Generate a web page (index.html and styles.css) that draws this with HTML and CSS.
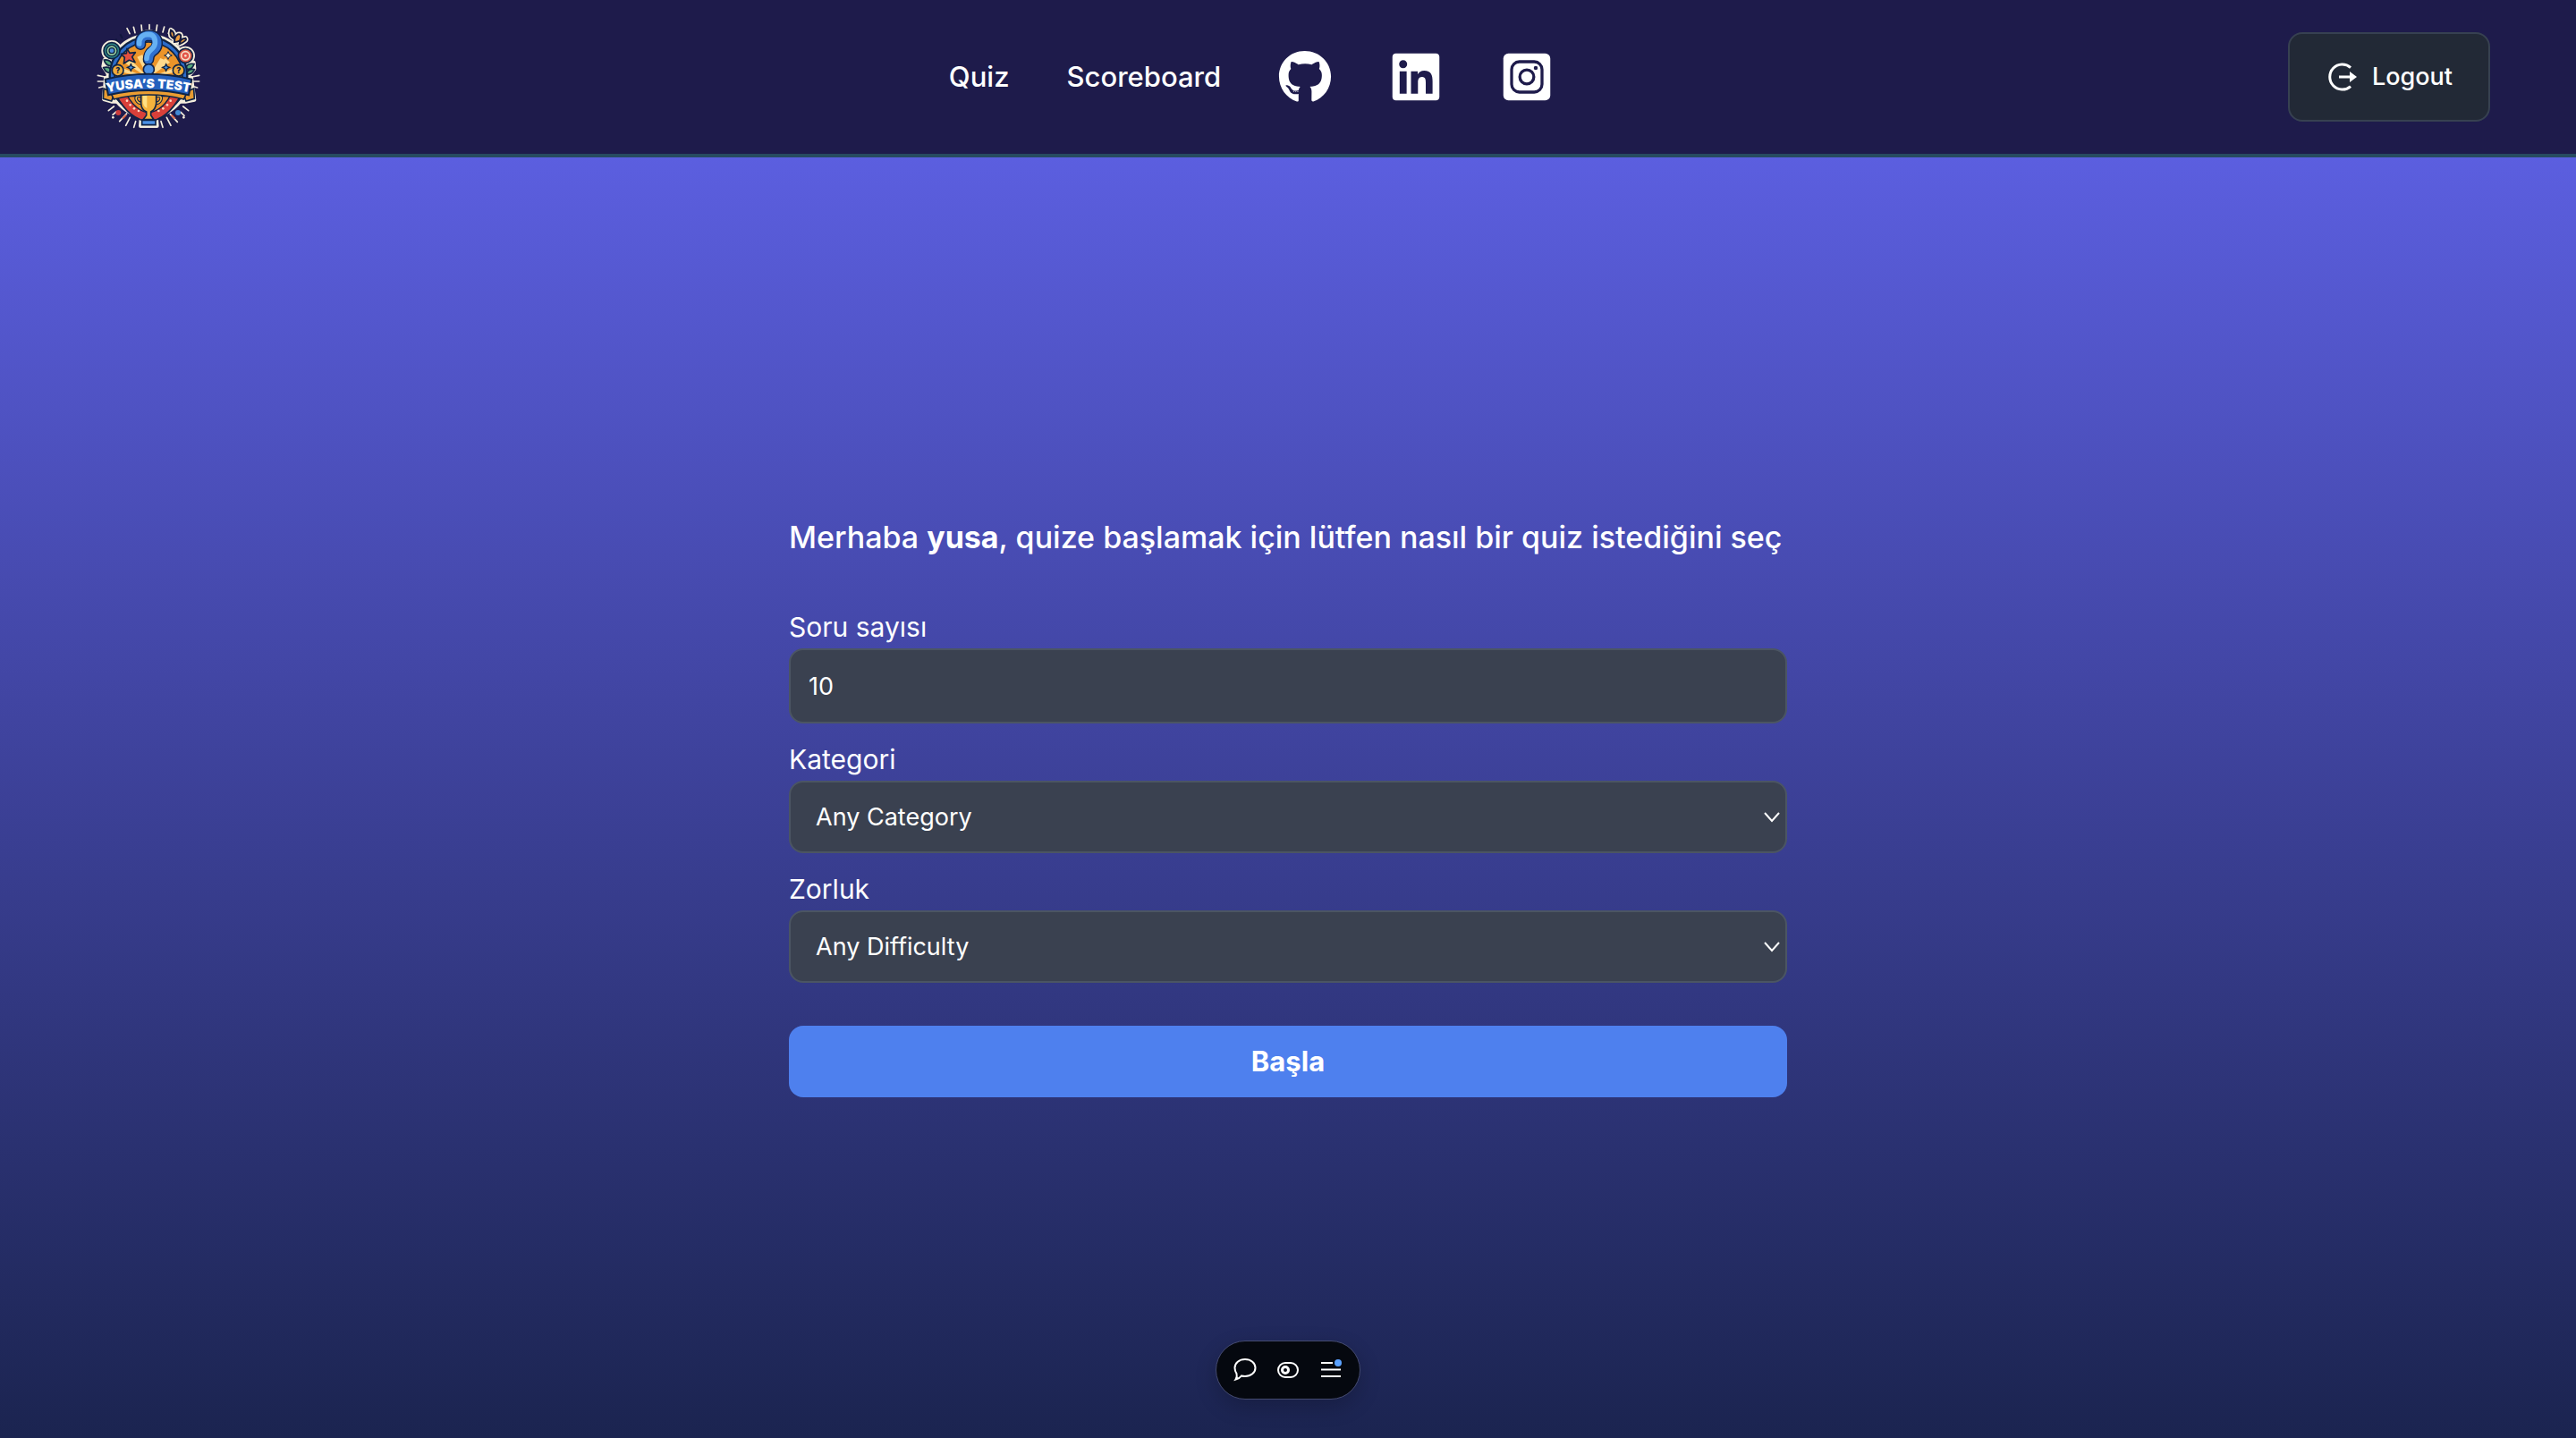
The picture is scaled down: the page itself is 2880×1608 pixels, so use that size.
FILE: index.html
```html
<!DOCTYPE html>
<html lang="tr">
<head>
<meta charset="utf-8">
<meta name="viewport" content="width=device-width, initial-scale=1">
<title>Yusa's Test</title>
<link rel="stylesheet" href="styles.css">
</head>
<body>
<header class="header">
  <a class="brand" href="#" aria-label="Yusa's Test">
    <svg class="logo" viewBox="0 0 450 450">
      <!-- rays -->
      <g stroke="#f4eedd" stroke-width="5" stroke-linecap="round">
        <path d="M156 62l9 18M178 58l5 19M204 51l2 19M231 50v17M257 51l-3 19M281 57l-5 18M303 62l-8 17M58 220l24 5M58 240h18M62 261l12-3M398 220l-24 5M398 240h-18M392 261l-10-3M94 338l18-14M108 352l12-10M131 374l24-26M152 388l14-27M179 394l6-20M362 338l-18-14M348 355l-12-12M325 376l-24-26M303 388l-14-27M276 394l-6-20"/>
      </g>
      <path d="M118 98l10 14M133 82l8 14" stroke="#10163c" stroke-width="6"/>
      <!-- cream outline around the whole badge -->
      <g fill="#f4eedd" stroke="#f4eedd" stroke-width="12" stroke-linejoin="round">
        <circle cx="228" cy="222" r="136"/>
        <circle cx="105" cy="137" r="29"/>
        <circle cx="352" cy="154" r="26"/>
        <circle cx="229" cy="113" r="40"/>
        <path d="M80 168l30 4v42H92L76 190zM380 176l-30 4v36h18l14-18zM84 228q144-32 288 0l10 74-30 6H104l-26-8zM205 340h48l4 50h-56z"/>
      </g>
      <!-- wreath leaves -->
      <g fill="#58a97c" stroke="#0f2344" stroke-width="5">
        <path d="M79 168q22-4 29 20-24 2-29-20zM77 194q22-6 32 14-22 10-32-14zM381 182q-22-6-30 16 22 6 30-16zM382 200q-18-4-28 14 20 6 28-14z"/>
      </g>
      <!-- disc -->
      <circle cx="228" cy="222" r="130" fill="#2c6cc9" stroke="#0f2344" stroke-width="7"/>
      <circle cx="228" cy="222" r="114" fill="#eb9429" stroke="#0f2344" stroke-width="5"/>
      <path d="M228 228L142 196l-9 12zM228 228l-62-64-14 16zM228 228l86-32 9 12zM228 228l56-66 16 14zM228 228l-38-70 18-8zM228 228l40-66 14 6z" fill="#ffd98c"/>
      <path d="M118 285q50 88 110 88t110-88z" fill="#d8403a" stroke="#0f2344" stroke-width="5"/>
      <path d="M158 290q30 50 70 55 44-5 72-55z" fill="#e98f2b" stroke="#0f2344" stroke-width="4"/>
      <g fill="#ffd8c4"><circle cx="156" cy="305" r="4"/><circle cx="167" cy="319" r="4"/><circle cx="180" cy="331" r="4"/><circle cx="195" cy="339" r="4"/><circle cx="302" cy="305" r="4"/><circle cx="291" cy="319" r="4"/><circle cx="277" cy="331" r="4"/><circle cx="262" cy="339" r="4"/></g>
      <!-- targets -->
      <circle cx="105" cy="137" r="27" fill="#2d8784" stroke="#0f2344" stroke-width="5"/>
      <circle cx="105" cy="137" r="18" fill="#9bd39f" stroke="#0f2344" stroke-width="4"/>
      <circle cx="105" cy="137" r="9" fill="#4d8ed9" stroke="#0f2344" stroke-width="4"/>
      <circle cx="352" cy="154" r="24" fill="#d95843" stroke="#0f2344" stroke-width="5"/>
      <circle cx="352" cy="154" r="14" fill="#e4574a" stroke="#f6dfc8" stroke-width="5"/>
      <circle cx="352" cy="154" r="4" fill="#f6dfc8"/>
      <!-- flourish -->
      <g fill="#ec9d3e" stroke="#f4eedd" stroke-width="16" stroke-linejoin="round">
        <path d="M303 68q14 6 10 28-16-8-10-28zM327 82q16-4 6 22-10 4-18 4 0-20 12-26zM352 95q8 8-20 20 0-18 20-20z"/>
      </g>
      <g fill="#ec9d3e" stroke="#131a3c" stroke-width="6">
        <path d="M303 68q14 6 10 28-16-8-10-28zM327 82q16-4 6 22-10 4-18 4 0-20 12-26zM352 95q8 8-20 20 0-18 20-20z"/>
      </g>
      <!-- star and sparkles -->
      <path d="M156 130l9 15 19-2-11 15 10 18-20-7-18 11 3-20-12-12 18-2z" fill="#e5503f" stroke="#0f2344" stroke-width="5" stroke-linejoin="round"/>
      <path d="M294 140l4 9 9 4-9 4-4 9-4-9-9-4 9-4z" fill="#fff4d6" stroke="#0f2344" stroke-width="3"/>
      <path d="M169 182l4 8 8 3-8 4-4 8-4-8-8-4 8-3zM287 182l4 8 8 3-8 4-4 8-4-8-8-4 8-3z" fill="#4c93dc" stroke="#0f2344" stroke-width="4"/>
      <!-- coins -->
      <circle cx="125" cy="203" r="19" fill="#efac3a" stroke="#0f2344" stroke-width="5"/>
      <circle cx="329" cy="203" r="19" fill="#efac3a" stroke="#0f2344" stroke-width="5"/>
      <text class="logo-coin" x="125" y="212" text-anchor="middle">?</text>
      <text class="logo-coin" x="329" y="212" text-anchor="middle">?</text>
      <!-- question mark -->
      <path d="M201 116Q198 87 230 86q29 1 27 29-1 15-17 25-11 8-12 27" fill="none" stroke="#10234a" stroke-width="38" stroke-linecap="round"/>
      <path d="M201 116Q198 87 230 86q29 1 27 29-1 15-17 25-11 8-12 27" fill="none" stroke="#2f70cf" stroke-width="29" stroke-linecap="round"/>
      <path d="M197 114Q196 83 228 82q24 1 22 31-2 13-16 23-11 8-12 27" fill="none" stroke="#66b1f3" stroke-width="17" stroke-linecap="round"/>
      <circle cx="229" cy="200" r="18" fill="#4b91e4" stroke="#10234a" stroke-width="5"/>
      <!-- trophy -->
      <path d="M205 289q-24-4-17 14 6 12 20 10M252 289q24-4 17 14-6 12-20 10" fill="none" stroke="#0f2344" stroke-width="11"/>
      <path d="M205 289q-24-4-17 14 6 12 20 10M252 289q24-4 17 14-6 12-20 10" fill="none" stroke="#f1b743" stroke-width="5"/>
      <path d="M203 280h51v34q-2 20-18 28v12l10 14h-36l11-14v-12q-17-8-18-28z" fill="#f4b33d" stroke="#0f2344" stroke-width="5"/>
      <path d="M209 282h14v48q-13-6-14-20z" fill="#ffe083"/>
      <path d="M206 370h46v16h-46z" fill="#4b91e4" stroke="#0f2344" stroke-width="5"/>
      <!-- ribbon -->
      <path d="M78 264l-2 34 28 8 10-26zM380 264l2 34-28 8-10-26z" fill="#e89b32" stroke="#0f2344" stroke-width="5"/>
      <path d="M100 276q128-34 258 0l-12 24q-116-30-234 0z" fill="#eb9d31" stroke="#0f2344" stroke-width="5"/>
      <path d="M83 233q145-36 290 0l-10 53q-134-32-270 0z" fill="#2460bd" stroke="#0f2344" stroke-width="6"/>
      <path id="ribbon-line" d="M88 277q140-30 280 0" fill="none"/>
      <text class="logo-name"><textPath href="#ribbon-line" startOffset="50%" text-anchor="middle">YUSA’S TEST</textPath></text>
      <!-- confetti -->
      <circle cx="127" cy="345" r="9" fill="#c93a3b"/><circle cx="327" cy="345" r="9" fill="#4389d2"/>
      <path d="M141 365l12-12M317 365l-12-12" stroke="#dd6342" stroke-width="6"/>
      <circle cx="109" cy="361" r="4" fill="#f4eedd"/><circle cx="346" cy="361" r="4" fill="#f4eedd"/>
    </svg>
  </a>
  <nav class="nav">
    <a href="#">Quiz</a>
    <a href="#">Scoreboard</a>
    <a href="#" aria-label="GitHub"><svg class="social" viewBox="0 0 496 512"><path d="M165.9 397.4c0 2-2.3 3.6-5.2 3.6-3.3.3-5.6-1.3-5.6-3.6 0-2 2.3-3.6 5.2-3.6 3-.3 5.6 1.3 5.6 3.6zm-31.1-4.5c-.7 2 1.3 4.3 4.3 4.9 2.6 1 5.6 0 6.2-2s-1.3-4.3-4.3-5.2c-2.6-.7-5.5.3-6.2 2.3zm44.2-1.7c-2.9.7-4.9 2.6-4.6 4.9.3 2 2.9 3.3 5.9 2.6 2.9-.7 4.9-2.6 4.6-4.6-.3-1.9-3-3.2-5.9-2.9zM244.8 8C106.1 8 0 113.3 0 252c0 110.9 69.8 205.8 169.5 239.2 12.8 2.3 17.3-5.6 17.3-12.1 0-6.2-.3-40.4-.3-61.4 0 0-70 15-84.7-29.8 0 0-11.4-29.1-27.8-36.6 0 0-22.9-15.7 1.6-15.4 0 0 24.9 2 38.6 25.8 21.9 38.6 58.6 27.5 72.9 20.9 2.3-16 8.8-27.1 16-33.7-55.9-6.2-112.3-14.3-112.3-110.5 0-27.5 7.6-41.3 23.6-58.9-2.6-6.5-11.1-33.3 2.6-67.9 20.9-6.5 69 27 69 27 20-5.6 41.5-8.5 62.8-8.5s42.8 2.9 62.8 8.5c0 0 48.1-33.6 69-27 13.7 34.7 5.2 61.4 2.6 67.9 16 17.7 25.8 31.5 25.8 58.9 0 96.5-58.9 104.2-114.8 110.5 9.2 7.9 17 22.9 17 46.4 0 33.7-.3 75.4-.3 83.6 0 6.5 4.6 14.4 17.3 12.1C428.2 457.8 496 362.9 496 252 496 113.3 383.5 8 244.8 8z"/></svg></a>
    <a href="#" aria-label="LinkedIn"><svg class="social" viewBox="0 0 448 512"><path d="M416 32H31.9C14.3 32 0 46.5 0 64.3v383.4C0 465.5 14.3 480 31.9 480H416c17.6 0 32-14.5 32-32.3V64.3c0-17.8-14.4-32.3-32-32.3zM135.4 416H69V202.2h66.5V416zm-33.2-243c-21.3 0-38.5-17.3-38.5-38.5S80.9 96 102.2 96c21.2 0 38.5 17.3 38.5 38.5 0 21.3-17.2 38.5-38.5 38.5zm282.1 243h-66.4V312c0-24.8-.5-56.7-34.5-56.7-34.6 0-39.9 27-39.9 54.9V416h-66.4V202.2h63.7v29.2h.9c8.9-16.8 30.6-34.5 62.2-34.5 66.5 0 78.9 43.8 78.9 100.9V416z"/></svg></a>
    <a href="#" aria-label="Instagram"><svg class="social" viewBox="0 0 448 512"><rect y="32" width="448" height="448" rx="48"/><g class="social-lines"><rect x="79" y="111" width="290" height="290" rx="74"/><circle cx="224" cy="256" r="67"/></g><circle class="social-dot" cx="309" cy="171" r="19"/></svg></a>
  </nav>
  <button class="logout" type="button">
    <svg class="logout-icon" viewBox="0 0 36 36"><path class="logout-ring" d="M28 7.500A14 14 0 1 0 28 28.500"/><path class="logout-shaft" d="M15 18h14"/><path class="logout-head" d="M27 12l8 6-8 6z"/></svg>
    Logout
  </button>
</header>
<main class="main">
  <form class="quiz-form">
    <h1 class="greeting">Merhaba <strong>yusa</strong>, quize başlamak için lütfen nasıl bir quiz istediğini seç</h1>
    <div class="field">
      <label for="amount">Soru sayısı</label>
      <input id="amount" class="control" type="text" inputmode="numeric" value="10">
    </div>
    <div class="field">
      <label for="category">Kategori</label>
      <span class="select">
        <select id="category" class="control"><option>Any Category</option></select>
        <svg class="chevron" viewBox="0 0 18 12"><path d="M1 1l8 9 8-9"/></svg>
      </span>
    </div>
    <div class="field">
      <label for="difficulty">Zorluk</label>
      <span class="select">
        <select id="difficulty" class="control"><option>Any Difficulty</option></select>
        <svg class="chevron" viewBox="0 0 18 12"><path d="M1 1l8 9 8-9"/></svg>
      </span>
    </div>
    <button class="start" type="submit">Başla</button>
  </form>
</main>
<div class="toolbar">
  <button type="button" aria-label="Comment"><svg viewBox="0 0 32 32"><path d="M5.500 26.500q2-3 1-6.500-2-3-2-6.500C4.500 8 9.500 4 16 4s11.500 4 11.500 9.500S22.500 23 16 23q-2 0-4-.5-2 2.800-6.500 4z"/></svg></button>
  <button type="button" aria-label="Flags"><svg viewBox="0 0 32 32"><rect x="5" y="8" width="22" height="16" rx="8"/><circle cx="13" cy="16" r="3.500" stroke-width="3"/></svg></button>
  <button type="button" aria-label="Menu"><svg viewBox="0 0 32 32"><path d="M5 8h13M5 15.500h22M5 23h22"/><circle class="badge" cx="24" cy="8" r="4"/></svg></button>
</div>
</body>
</html>
```
FILE: styles.css
```css
* {
  box-sizing: border-box;
}

body {
  display: flex;
  flex-direction: column;
  min-height: 100vh;
  margin: 0;
  background: linear-gradient(#6366f1, #4044a0 50%, #1b2450);
  color: #fff;
  font-family: Inter, "Liberation Sans", sans-serif;
  font-size: 30px;
  line-height: 40px;
}

button,
input,
select {
  color: inherit;
  font: inherit;
}

.header {
  display: flex;
  align-items: center;
  justify-content: space-between;
  padding: 11px 96px 11px 90px;
  border-bottom: 4px solid #274b60;
  background: #1e1b4b;
}

.logo {
  display: block;
  width: 150px;
  height: 150px;
}

.logo-name {
  fill: #fff;
  font-size: 42px;
  font-weight: 900;
}

.logo-coin {
  fill: #0f2344;
  font-size: 25px;
  font-weight: 900;
}

.nav {
  display: flex;
  align-items: center;
  gap: 64px;
  font-size: 31px;
  font-weight: 500;
}

.nav a {
  color: inherit;
  text-decoration: none;
}

.social {
  display: block;
  width: 60px;
  height: 60px;
  fill: #fff;
}

.social-lines {
  fill: none;
  stroke: #1e1b4b;
  stroke-width: 28;
}

.social-dot {
  fill: #1e1b4b;
}

.logout {
  display: flex;
  align-items: center;
  gap: 16px;
  padding: 28px 40px;
  border: 2px solid #374151;
  border-radius: 16px;
  background: #222936;
  font-size: 27px;
  font-weight: 500;
}

.logout-icon {
  width: 36px;
  height: 36px;
  fill: none;
  stroke: #fff;
  stroke-width: 3;
}

.logout-head {
  fill: #fff;
  stroke: none;
}

.main {
  display: flex;
  flex: 1;
  align-items: center;
  justify-content: center;
  padding: 46px 24px 24px;
}

.quiz-form {
  display: flex;
  flex-direction: column;
  gap: 20px;
  width: 100%;
  max-width: 1116px;
}

.greeting {
  margin: 0 0 38px;
  font-size: 34px;
  font-weight: 500;
  line-height: 44px;
}

.greeting strong {
  font-weight: 700;
}

.field {
  display: flex;
  flex-direction: column;
  gap: 4px;
}

.select {
  display: grid;
  align-items: center;
}

.select > * {
  grid-area: 1 / 1;
}

.control {
  width: 100%;
  height: 84px;
  padding: 0 20px;
  border: 2px solid #4b5563;
  border-radius: 16px;
  outline: none;
  background: #3a4150;
  font-size: 27px;
}

select.control {
  height: 81px;
  padding-left: 28px;
  appearance: none;
}

.chevron {
  justify-self: end;
  width: 18px;
  height: 12px;
  margin-right: 8px;
  fill: none;
  stroke: #fff;
  stroke-width: 2;
  pointer-events: none;
}

.start {
  height: 80px;
  margin-top: 28px;
  border: 0;
  border-radius: 16px;
  background: #4e80ee;
  font-size: 31px;
  font-weight: 700;
}

.toolbar {
  position: fixed;
  bottom: 43px;
  left: 50%;
  display: flex;
  gap: 16px;
  padding: 16px;
  border: 1px solid #454b70;
  border-radius: 40px;
  background: #05080f;
  box-shadow: 0 8px 24px rgb(0 0 0 / 20%);
  transform: translateX(-50%);
}

.toolbar button {
  padding: 0;
  border: 0;
  background: none;
}

.toolbar svg {
  display: block;
  width: 32px;
  height: 32px;
  fill: none;
  stroke: #fff;
  stroke-width: 2;
}

.toolbar .badge {
  fill: #5ba2ff;
  stroke: none;
}
```
